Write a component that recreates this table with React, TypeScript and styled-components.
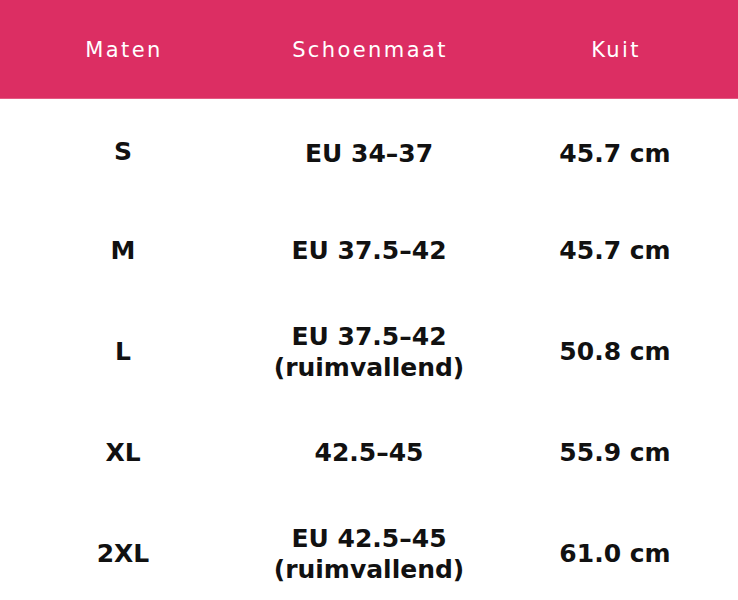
import React from "react";
import styled, { createGlobalStyle } from "styled-components";

const Global = createGlobalStyle`
  html, body { margin: 0; padding: 0; background: #ffffff; }
  body { font-family: "DejaVu Sans", "Noto Sans", sans-serif; }
`;

const Table = styled.div`
  width: 738px;
  display: flex;
  flex-direction: column;
`;

const HeadRow = styled.div`
  display: grid;
  grid-template-columns: repeat(3, 1fr);
  height: 98px;
  align-items: center;
  background: #dc2e63;
  border-bottom: 1px solid #e45a83;
`;

const HeadCell = styled.div`
  text-align: center;
  color: #ffffff;
  font-family: "DejaVu Sans", sans-serif;
  font-size: 21px;
  font-weight: 400;
  letter-spacing: 2.4px;
  padding-left: 2px;
  padding-top: 2px;
`;

const Row = styled.div<{ $first?: boolean }>`
  box-sizing: border-box;
  display: grid;
  grid-template-columns: repeat(3, 1fr);
  height: 101px;
  padding-top: ${(p) => (p.$first ? "7px" : "0")};
  align-items: center;
`;

const Cell = styled.div<{ $lift?: boolean }>`
  text-align: center;
  color: #111111;
  font-family: "DejaVu Sans", sans-serif;
  font-size: 25px;
  font-weight: 700;
  line-height: 31px;
  margin-top: ${(p) => (p.$lift ? "-3px" : "0")};
`;

const rows: [string, string[], string][] = [
  ["S", ["EU 34–37"], "45.7 cm"],
  ["M", ["EU 37.5–42"], "45.7 cm"],
  ["L", ["EU 37.5–42", "(ruimvallend)"], "50.8 cm"],
  ["XL", ["42.5–45"], "55.9 cm"],
  ["2XL", ["EU 42.5–45", "(ruimvallend)"], "61.0 cm"],
];

export default function App() {
  return (
    <>
      <Global />
      <Table>
        <HeadRow>
          <HeadCell>Maten</HeadCell>
          <HeadCell>Schoenmaat</HeadCell>
          <HeadCell>Kuit</HeadCell>
        </HeadRow>
        {rows.map(([size, shoe, calf], i) => (
          <Row key={size} $first={i === 0}>
            <Cell $lift={i === 0}>{size}</Cell>
            <Cell>
              {shoe.map((l) => (
                <div key={l}>{l}</div>
              ))}
            </Cell>
            <Cell>{calf}</Cell>
          </Row>
        ))}
      </Table>
    </>
  );
}
